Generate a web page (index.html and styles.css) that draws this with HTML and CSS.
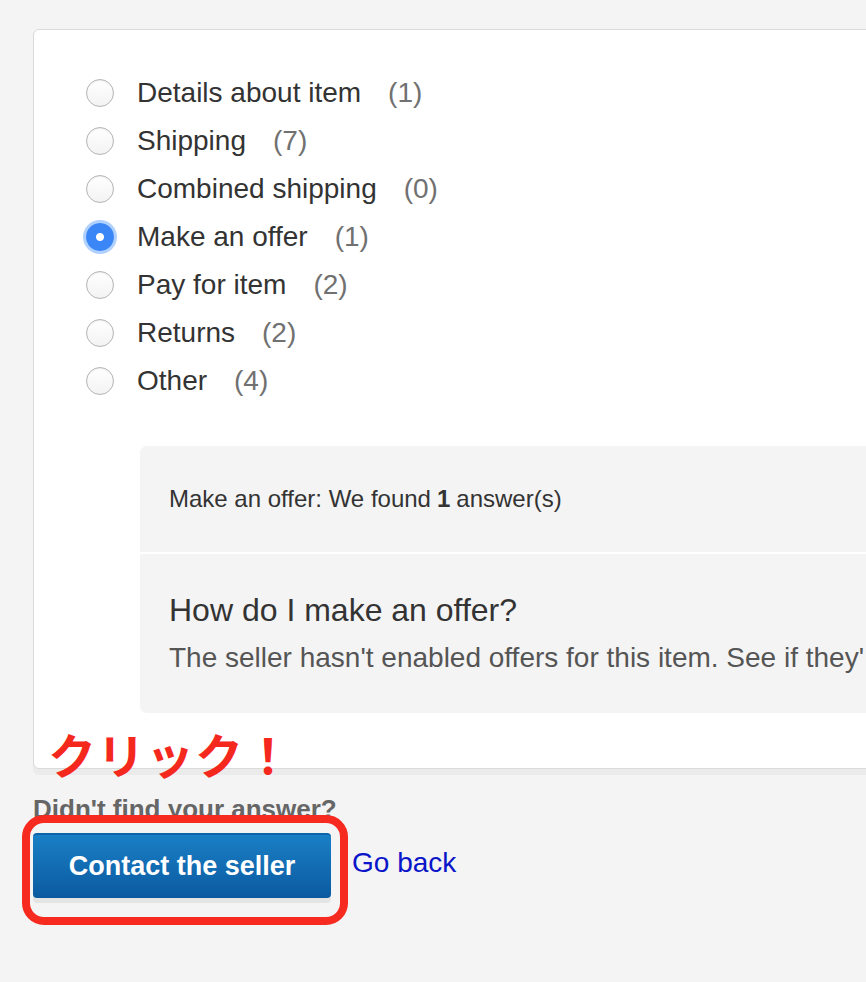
FILE: index.html
```html
<!DOCTYPE html>
<html>
<head>
<meta charset="utf-8">
<link rel="stylesheet" href="styles.css">
</head>
<body>
<div class="page">
  <div class="card">
    <ul class="topics">
      <li class="topic"><span class="radio"></span><span class="label">Details about item</span><span class="count">(1)</span></li>
      <li class="topic"><span class="radio"></span><span class="label">Shipping</span><span class="count">(7)</span></li>
      <li class="topic"><span class="radio"></span><span class="label">Combined shipping</span><span class="count">(0)</span></li>
      <li class="topic"><span class="radio checked"></span><span class="label">Make an offer</span><span class="count">(1)</span></li>
      <li class="topic"><span class="radio"></span><span class="label">Pay for item</span><span class="count">(2)</span></li>
      <li class="topic"><span class="radio"></span><span class="label">Returns</span><span class="count">(2)</span></li>
      <li class="topic"><span class="radio"></span><span class="label">Other</span><span class="count">(4)</span></li>
    </ul>
    <div class="answers">
      <div class="answers-head">Make an offer: We found <b>1</b> answer(s)</div>
      <div class="answer">
        <div class="question">How do I make an offer?</div>
        <div class="reply">The seller hasn't enabled offers for this item. See if they'</div>
      </div>
    </div>
  </div>
  <div class="footer">
    <div class="notfound">Didn't find your answer?</div>
    <div class="actions">
      <button class="contact">Contact the seller</button>
      <a class="goback" href="#">Go back</a>
    </div>
  </div>
  <div class="note">クリック！</div>
  <div class="highlight"></div>
</div>
</body>
</html>
```
FILE: styles.css
```css
html, body {
  margin: 0;
  padding: 0;
}
body {
  background: #f4f4f4;
  font-family: "Liberation Sans", Arial, Helvetica, sans-serif;
  overflow: hidden;
  width: 866px;
  height: 982px;
}
.page {
  position: relative;
  width: 866px;
  height: 982px;
  padding-top: 29px;
  box-sizing: border-box;
  overflow: hidden;
}
.card {
  margin-left: 33px;
  width: 900px;
  background: #fff;
  border: 1px solid #dadada;
  border-radius: 6px;
  box-shadow: 0 6px 0 #ebebeb;
  padding: 39px 0 55px 52px;
  box-sizing: border-box;
}
.topics {
  list-style: none;
  margin: 0;
  padding: 0;
}
.topic {
  display: flex;
  align-items: center;
  height: 48px;
  font-size: 28px;
  color: #333;
}
.radio {
  width: 26px;
  height: 26px;
  border-radius: 50%;
  border: 1px solid #b5b5b5;
  background: linear-gradient(#ffffff, #f3f3f3);
  box-shadow: inset 0 1px 1px rgba(0,0,0,0.08);
  flex: none;
  margin-right: 23px;
}
.radio.checked {
  width: 28px;
  height: 28px;
  border: none;
  background: radial-gradient(circle, #fff 0 3.5px, #3b86f7 4.5px);
  box-shadow: 0 0 0 3px rgba(80, 150, 250, 0.45);
}
.count {
  margin-left: 27px;
  color: #717171;
}
.answers {
  margin: 41px 0 0 54px;
  background: #f4f4f4;
  border-radius: 7px;
}
.answers-head {
  height: 106px;
  display: flex;
  align-items: center;
  padding-left: 29px;
  font-size: 24px;
  color: #333;
  border-bottom: 2px solid #fff;
}
.answers-head b {
  margin: 0 6px;
}
.answer {
  padding: 37px 0 39px 29px;
  white-space: nowrap;
  overflow: hidden;
}
.question {
  font-size: 32px;
  color: #333;
  line-height: 38px;
}
.reply {
  font-size: 28px;
  color: #555;
  line-height: 32px;
  margin-top: 13px;
}
.footer {
  padding: 27px 0 0 33px;
}
.notfound {
  font-size: 26px;
  font-weight: bold;
  color: #666;
  line-height: 26px;
}
.actions {
  display: flex;
  align-items: center;
  gap: 21px;
  margin-top: 11px;
}
.contact {
  width: 298px;
  height: 65px;
  border: none;
  border-radius: 4px;
  background: linear-gradient(#1a7fc5, #0b5aa0);
  border-top: 2px solid #0e64a8;
  box-shadow: 0 5px 0 #e4e4e4;
  color: #fff;
  font-family: "Liberation Sans", Arial, Helvetica, sans-serif;
  font-size: 27px;
  font-weight: bold;
  padding: 0;
}
.goback {
  font-size: 28px;
  color: #0a14c8;
  text-decoration: none;
  margin-top: -5px;
}
.note {
  position: absolute;
  left: 48px;
  top: 722px;
  font-family: "Noto Sans CJK JP", sans-serif;
  font-weight: bold;
  font-size: 48px;
  line-height: 62px;
  color: #f5281e;
  letter-spacing: 1px;
}
.highlight {
  position: absolute;
  left: 22px;
  top: 815px;
  width: 326px;
  height: 110px;
  box-sizing: border-box;
  border: 8px solid #f72a1f;
  border-radius: 22px;
}
```
